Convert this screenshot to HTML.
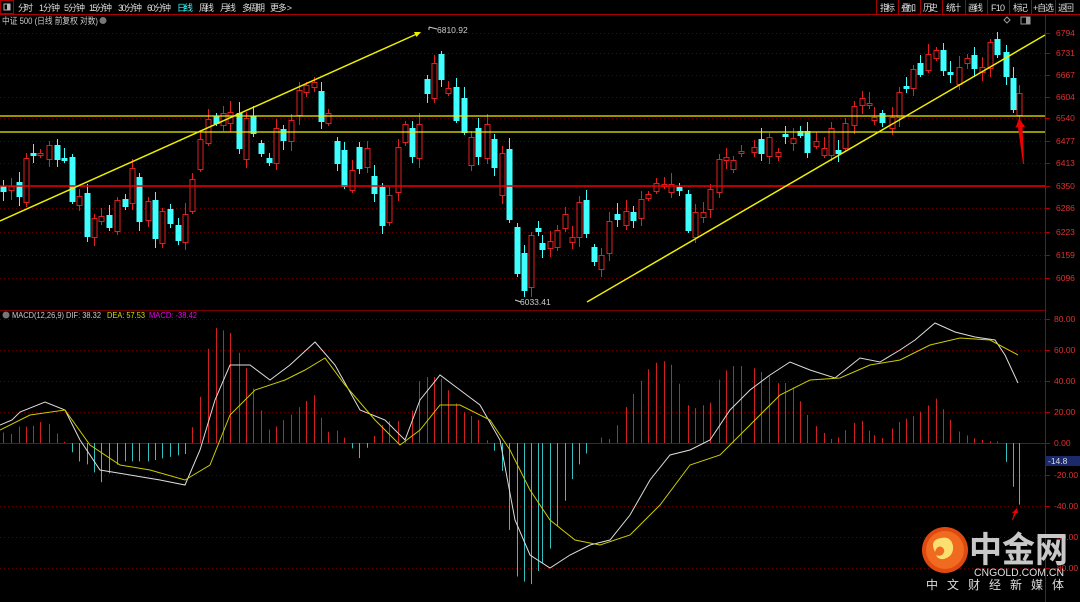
<!DOCTYPE html>
<html><head><meta charset="utf-8"><style>
html,body{margin:0;padding:0;background:#000;width:1080px;height:602px;overflow:hidden}
svg{display:block}
text{font-family:"Liberation Sans","Noto Sans CJK SC",sans-serif}
</style></head><body>
<svg id="s" width="1080" height="602" xmlns="http://www.w3.org/2000/svg">
<rect width="1080" height="602" fill="#000"/>
<rect x="0.5" y="0.5" width="13" height="13" fill="none" stroke="#a00"/>
<rect x="4" y="4" width="6" height="6" fill="none" stroke="#bbb"/>
<rect x="7" y="4" width="3" height="6" fill="#bbb"/>
<line x1="0" y1="14.5" x2="1080" y2="14.5" stroke="#a00"/>
<g font-size="9" fill="#ddd" lengthAdjust="spacingAndGlyphs">
<text x="18" y="11" textLength="15">分时</text><text x="39" y="11" textLength="21">1分钟</text><text x="64" y="11" textLength="21">5分钟</text><text x="89" y="11" textLength="23">15分钟</text><text x="118" y="11" textLength="24">30分钟</text><text x="147" y="11" textLength="24">60分钟</text>
<text x="177" y="11" fill="#3ff" textLength="16">日线</text><text x="199" y="11" textLength="15">周线</text><text x="220" y="11" textLength="16">月线</text><text x="242" y="11" textLength="23">多周期</text><text x="270" y="11" textLength="22">更多 &gt;</text>
<text x="880" y="11" textLength="15">指标</text><text x="901" y="11" textLength="15">叠加</text><text x="923" y="11" textLength="15">历史</text><text x="946" y="11" textLength="15">统计</text><text x="968" y="11" textLength="15">画线</text><text x="991" y="11" textLength="14">F10</text><text x="1013" y="11" textLength="15">标记</text><text x="1033" y="11" textLength="21">+自选</text><text x="1058" y="11" textLength="16">返回</text>
</g>
<g stroke="#a00"><line x1="876.5" y1="0" x2="876.5" y2="14"/><line x1="898.5" y1="0" x2="898.5" y2="14"/><line x1="920.5" y1="0" x2="920.5" y2="14"/><line x1="942.5" y1="0" x2="942.5" y2="14"/><line x1="965.5" y1="0" x2="965.5" y2="14"/><line x1="987.5" y1="0" x2="987.5" y2="14"/><line x1="1009.5" y1="0" x2="1009.5" y2="14"/><line x1="1031.5" y1="0" x2="1031.5" y2="14"/><line x1="1055.5" y1="0" x2="1055.5" y2="14"/></g>
<text x="2" y="24" font-size="9" fill="#ccc" textLength="96" lengthAdjust="spacingAndGlyphs">中证 500 (日线 前复权 对数)</text>
<circle cx="103" cy="20.5" r="3.5" fill="#777"/>
<rect x="1021" y="17" width="9" height="7" fill="none" stroke="#999"/><rect x="1026" y="17" width="4" height="7" fill="#999"/>
<path d="M1007 17 l3 3 -3 3 -3 -3z" fill="none" stroke="#999"/>
<line x1="1045.5" y1="15" x2="1045.5" y2="602" stroke="#a00"/>
<line x1="0" y1="310.5" x2="1045" y2="310.5" stroke="#700"/>
<g id="grid"></g>
<g id="candles"></g>
<g id="hist"></g>
<line x1="0" y1="116" x2="1045" y2="116" stroke="#ee0" stroke-width="1.3"/>
<line x1="0" y1="132" x2="1045" y2="132" stroke="#ee0" stroke-width="1.3"/>
<line x1="0" y1="186" x2="1045" y2="186" stroke="#e00" stroke-width="1.5"/>
<line x1="0" y1="221" x2="419" y2="33" stroke="#ee0" stroke-width="1.5"/>
<path d="M421 32 l-7 0 2.5 5z" fill="#ee0"/>
<line x1="587" y1="302" x2="1045" y2="35" stroke="#ee0" stroke-width="1.5"/>
<path d="M1019 118 l-3.5 10 2.5 -1 5 37 1 0 -1.5 -37 2.5 0z" fill="#e00"/>
<path d="M1017 508 l-5 5 2 0 -2 7 1 0 3 -7 2 0z" fill="#e00"/>
<path d="M429 27 l0 3 M429 27 l8 2" stroke="#ccc" fill="none"/>
<text x="437" y="33" font-size="8.5" fill="#ccc">6810.92</text>
<path d="M515 300 l6 2" stroke="#ccc"/>
<text x="520" y="305" font-size="8.5" fill="#ccc">6033.41</text>
<polyline id="dif" fill="none" stroke="#ddd" stroke-width="1"/>
<polyline id="dea" fill="none" stroke="#cc0" stroke-width="1"/>
<g font-size="8.5" fill="#e03030" id="axl"></g>
<circle cx="6" cy="315" r="3.5" fill="#777"/>
<text x="12" y="318" font-size="8.5" fill="#ccc" textLength="89" lengthAdjust="spacingAndGlyphs">MACD(12,26,9) DIF: 38.32</text>
<text x="107" y="318" font-size="8.5" fill="#dd0" textLength="38" lengthAdjust="spacingAndGlyphs">DEA: 57.53</text>
<text x="149" y="318" font-size="8.5" fill="#e0e" textLength="48" lengthAdjust="spacingAndGlyphs">MACD: -38.42</text>
<rect x="1045" y="456" width="35" height="10" fill="#1a2a6a"/>
<text x="1048" y="464" font-size="8.5" fill="#ddd">-14.8</text>
<circle cx="945" cy="550" r="23" fill="#e04a10"/>
<circle cx="945" cy="550" r="19" fill="#f06a20"/>
<path d="M935 552 q-6 -12 6 -14 q10 -2 12 8 q1 10 -9 13 q-6 1 -8 -4 q4 2 7 -1 q3 -4 -1 -7 q-5 -2 -7 5z" fill="#fbe070"/>
<text x="969" y="562" font-size="35" font-weight="bold" fill="#c8c8c8" font-family="Noto Sans CJK SC,sans-serif" textLength="99" lengthAdjust="spacingAndGlyphs">中金网</text>
<text x="974" y="576" font-size="11" fill="#ddd" textLength="90" lengthAdjust="spacingAndGlyphs">CNGOLD.COM.CN</text>
<text x="926" y="589" font-size="12" fill="#ddd" textLength="138">中文财经新媒体</text>
</svg>
<script>
var NS="http://www.w3.org/2000/svg",s=document.getElementById('s');
function el(p,t,a){var e=document.createElementNS(NS,t);for(var k in a)e.setAttribute(k,a[k]);p.appendChild(e);return e;}
var g=document.getElementById('grid');
var ax=[[6794,33],[6731,53],[6667,75],[6604,97],[6540,118],[6477,141],[6413,163],[6350,186],[6286,208],[6223,232],[6159,255],[6096,278]];
var al=document.getElementById('axl');
ax.forEach(function(a){el(g,'line',{x1:0,y1:a[1]+.5,x2:1045,y2:a[1]+.5,stroke:'#600','stroke-dasharray':'1 3'});el(g,'line',{x1:1045,y1:a[1]+.5,x2:1050,y2:a[1]+.5,stroke:'#a00'});var t=el(al,'text',{x:1056,y:a[1]+3});t.textContent=a[0];});
[[80,319],[60,350],[40,381],[20,412],[0,443],[-20,475],[-40,506],[-60,537],[-80,568]].forEach(function(a){
 el(g,'line',{x1:0,y1:a[1]+.5,x2:1045,y2:a[1]+.5,stroke:a[0]==0?'#900':'#600','stroke-dasharray':a[0]==0?'':'1 3'});
 el(g,'line',{x1:1045,y1:a[1]+.5,x2:1050,y2:a[1]+.5,stroke:'#a00'});
 var t=el(al,'text',{x:1054,y:a[1]+3});t.textContent=a[0].toFixed(2);});
var L=[[3,186,191,'c'],[11,186,190,'r'],[18,182,196,'c'],[25,158,202,'r'],[32,153,155,'c'],[39,153,155,'r'],[47,145,159,'r'],[55,145,159,'c'],[62,158,160,'c'],[70,157,201,'c'],[76,196,205,'r'],[84,193,236,'c'],[91,218,237,'r'],[98,216,221,'r'],[106,215,227,'c'],[113,200,231,'r'],[121,199,206,'c'],[128,168,203,'r'],[135,177,221,'c'],[143,201,220,'r'],[150,200,238,'c'],[157,211,243,'r'],[165,209,223,'c'],[172,225,240,'c'],[179,214,242,'r'],[186,179,211,'r'],[194,139,169,'r'],[201,119,143,'r'],[209,116,123,'c'],[216,113,125,'r'],[223,112,123,'r'],[231,113,148,'c'],[238,118,159,'r'],[245,116,133,'c'],[253,143,153,'c'],[260,158,162,'c'],[267,128,163,'r'],[274,129,140,'c'],[282,120,141,'r'],[289,90,115,'r'],[296,85,92,'r'],[304,82,87,'r'],[311,91,121,'c'],[318,113,123,'r'],[326,141,163,'c'],[333,150,186,'c'],[341,170,190,'r'],[348,147,168,'c'],[355,148,167,'r'],[362,176,193,'c'],[370,187,225,'c'],[377,195,222,'r'],[385,147,192,'r'],[392,124,142,'r'],[399,128,156,'c'],[406,124,158,'r'],[413,79,93,'c'],[420,63,98,'r'],[427,54,79,'c'],[434,88,93,'r'],[441,87,120,'c'],[449,98,132,'c'],[456,137,165,'r'],[463,128,156,'c'],[471,124,158,'r'],[478,139,167,'c'],[486,153,195,'r'],[493,149,219,'c'],[500,227,273,'c'],[507,253,290,'c'],[514,235,287,'r'],[521,228,231,'c']];
var R=[[540,243,249,'c'],[548,241,248,'r'],[555,230,247,'r'],[562,214,228,'r'],[569,237,242,'r'],[576,202,237,'r'],[583,200,233,'c'],[590,247,261,'c'],[597,255,269,'r'],[605,221,253,'r'],[613,214,219,'c'],[621,211,225,'r'],[628,212,220,'c'],[636,199,218,'r'],[643,194,198,'r'],[650,183,191,'r'],[658,184,186,'r'],[665,184,192,'r'],[673,187,190,'c'],[681,194,230,'c'],[688,212,237,'r'],[696,212,217,'r'],[703,189,209,'r'],[711,159,192,'r'],[718,157,160,'r'],[725,160,169,'r'],[733,151,153,'r'],[745,147,152,'r'],[752,139,153,'c'],[760,137,156,'r'],[768,152,156,'r'],[775,134,136,'c'],[783,138,143,'r'],[790,131,135,'c'],[797,131,152,'c'],[805,141,146,'r'],[813,148,155,'r'],[820,128,155,'r'],[827,150,153,'c'],[833,123,148,'r'],[842,106,125,'r'],[850,98,105,'r'],[857,103,105,'r'],[861,117,120,'r'],[869,113,122,'c'],[879,117,128,'r'],[886,92,117,'r'],[892,86,88,'c'],[899,69,88,'r'],[906,63,74,'c'],[914,54,70,'r'],[921,50,58,'r'],[928,50,70,'c'],[935,72,74,'c'],[944,67,84,'r'],[951,58,63,'r'],[958,55,68,'c'],[966,67,72,'r'],[974,42,68,'r'],[980,39,54,'c'],[989,52,76,'c'],[996,78,109,'c'],[1002,93,115,'r']];
var cg=document.getElementById('candles'),X=[];
function dc(c,x){var col=c[3]=='r'?'#e02020':'#40ffff',h=Math.max(c[2]-c[1],1.5);
 var w1=c[1]-3-((x*7)%9),w2=c[2]+3+((x*13)%8);
 el(cg,'line',{x1:x+.5,y1:w1,x2:x+.5,y2:w2,stroke:col});
 if(c[3]=='r')el(cg,'rect',{x:x-2,y:c[1]+.5,width:5,height:h,fill:'#000',stroke:col});
 else el(cg,'rect',{x:x-2.5,y:c[1],width:6,height:h+1,fill:col});X.push(x);}
L.forEach(function(c){dc(c,Math.round(c[0]*1.033));});
R.forEach(function(c){dc(c,Math.round(540+(c[0]-540)*1.033+2));});
var D=[[0,425],[12,420],[20,412],[45,402],[65,410],[80,440],[100,470],[130,475],[160,480],[185,485],[200,450],[215,400],[230,365],[250,365],[270,380],[290,365],[315,342],[335,365],[360,410],[385,420],[405,440],[420,400],[440,375],[460,390],[480,405],[500,440],[515,520],[530,555],[550,568],[570,555],[590,545],[610,540],[630,515],[650,480],[670,455],[690,450],[710,440],[730,410],[750,390],[770,375],[790,362],[810,370],[835,378],[860,358],[880,362],[900,350],[915,340],[935,323],[955,332],[975,337],[995,340],[1005,355],[1018,383]];
var E=[[0,430],[30,415],[65,410],[90,445],[120,465],[150,470],[185,480],[210,465],[230,415],[255,390],[285,380],[305,370],[325,358],[345,385],[375,420],[400,445],[420,430],[440,405],[460,405],[490,420],[510,450],[530,490],[550,520],[575,540],[600,545],[630,535],[660,505],[690,465],[720,455],[750,425],[780,395],[810,380],[840,378],[870,365],[900,360],[930,345],[960,338],[990,340],[1018,355]];
document.getElementById('dif').setAttribute('points',D.map(function(p){return p.join(',')}).join(' '));
document.getElementById('dea').setAttribute('points',E.map(function(p){return p.join(',')}).join(' '));
function itp(A,x){for(var i=1;i<A.length;i++)if(x<=A[i][0]){var a=A[i-1],b=A[i];return a[1]+(b[1]-a[1])*(x-a[0])/(b[0]-a[0]);}return A[A.length-1][1];}
var hg=document.getElementById('hist');
X.forEach(function(x){var d=(itp(E,x)-itp(D,x))*2.2;if(Math.abs(d)<1)return;
 el(hg,'line',{x1:x+.5,y1:443,x2:x+.5,y2:443-d,stroke:d>0?'#d02020':'#30c0c0'});});
</script>
</body></html>
